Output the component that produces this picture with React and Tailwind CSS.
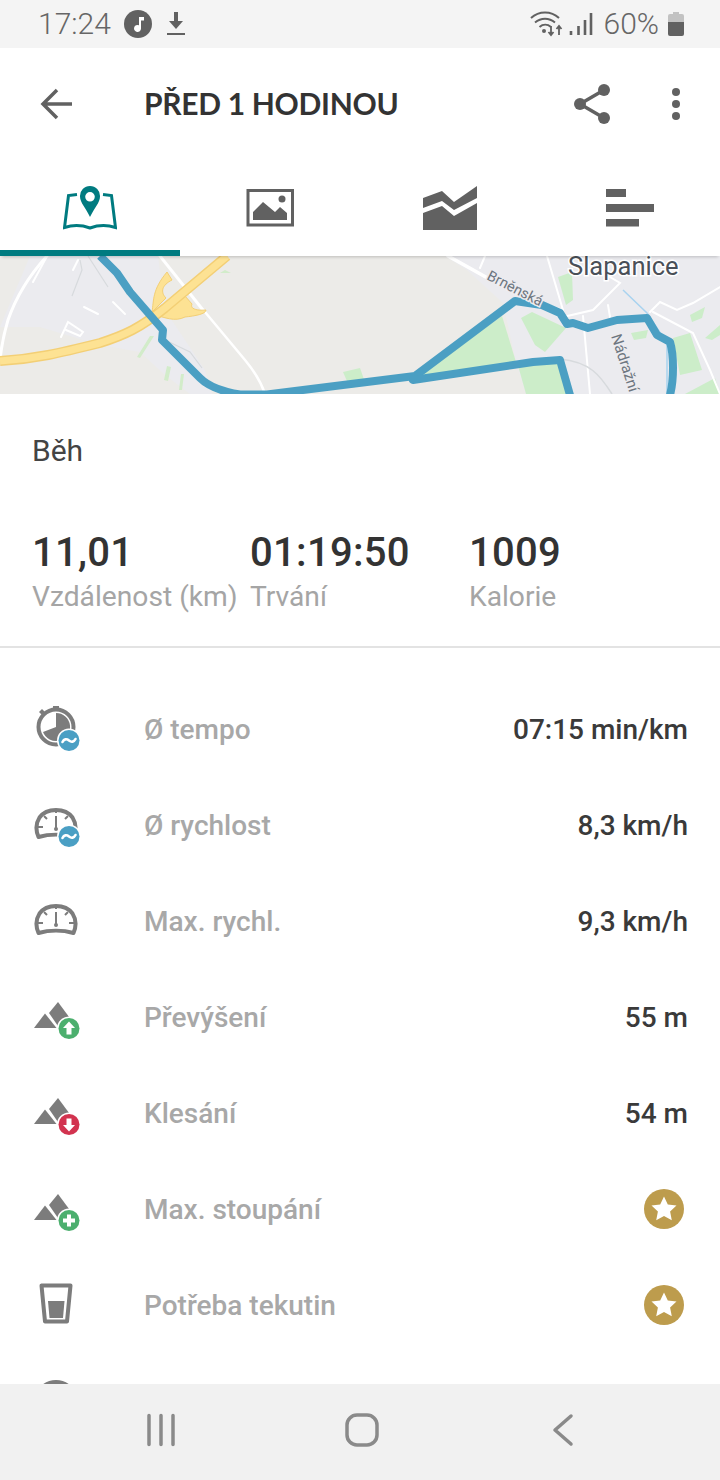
const stats = [
  { value: '11,01', label: 'Vzdálenost (km)', width: 'w-[218px]' },
  { value: '01:19:50', label: 'Trvání', width: 'w-[219px]' },
  { value: '1009', label: 'Kalorie', width: 'w-[200px]' },
];

function Badge({ color, children }) {
  return (
    <>
      <circle cx="36" cy="35.5" r="12" fill="#fff" />
      <circle cx="36" cy="35.5" r="10.5" fill={color} />
      {children}
    </>
  );
}

const Wave = () => (
  <Badge color="#4a9fc4">
    <path d="M29.5 37c1.5-3 4-3.5 6.500-1.500s5 1.500 6.500-1.500" fill="none" stroke="#fff" strokeWidth="2.600" strokeLinecap="round" />
  </Badge>
);

function RowIcon({ children }) {
  return (
    <svg width="48" height="48" viewBox="0 0 48 48" className="shrink-0">
      {children}
    </svg>
  );
}

const Pace = () => (
  <RowIcon>
    <circle cx="23" cy="22" r="17.500" fill="none" stroke="#7c7c7c" strokeWidth="4" />
    <rect x="20" y="1" width="6" height="4" fill="#7c7c7c" />
    <path d="M6 7l3-3 3 3-3 3z" fill="#7c7c7c" />
    <path d="M23 22V8A14 14 0 1 1 10 27z" fill="#7c7c7c" />
    <Wave />
  </RowIcon>
);

const Gauge = ({ children }) => (
  <RowIcon>
    <path d="M5.500 36C2.500 29 3 22 6.500 16.500 10.500 11 16 9 23 9s12.500 2 16.500 7.500C43 22 43.500 29 40.500 36 30 33 16 33 5.500 36z" fill="none" stroke="#7c7c7c" strokeWidth="4" strokeLinejoin="round" />
    <path d="M23 15v13M5 26h5M36 26h5M11 15l3 3M35 15l-3 3M23 9v3" stroke="#7c7c7c" strokeWidth="2" fill="none" />
    <circle cx="23" cy="28" r="2" fill="#7c7c7c" />
    {children}
  </RowIcon>
);

const Mountains = ({ children }) => (
  <RowIcon>
    <path d="M1 35L12 20.500 23.500 35z" fill="#7c7c7c" />
    <path d="M16 20L25 9l17 23-16 2.500z" fill="#7c7c7c" />
    {children}
  </RowIcon>
);

const Glass = () => (
  <RowIcon>
    <path d="M8.500 4.500h29L34 40.500H12z" fill="none" stroke="#7c7c7c" strokeWidth="4" strokeLinejoin="round" />
    <path d="M15 20h16.500l-1.500 17H16.500z" fill="#7c7c7c" />
  </RowIcon>
);

const rows = [
  { icon: <Pace />, label: 'Ø tempo', value: '07:15 min/km' },
  { icon: <Gauge><Wave /></Gauge>, label: 'Ø rychlost', value: '8,3 km/h' },
  { icon: <Gauge />, label: 'Max. rychl.', value: '9,3 km/h' },
  {
    icon: (
      <Mountains>
        <Badge color="#4caf6e">
          <path d="M36 28.500l6 6.500h-3.500v6.500h-5V35H30z" fill="#fff" />
        </Badge>
      </Mountains>
    ),
    label: 'Převýšení',
    value: '55 m',
  },
  {
    icon: (
      <Mountains>
        <Badge color="#d2334f">
          <path d="M36 42.500l6-6.500h-3.500v-6.500h-5V36H30z" fill="#fff" />
        </Badge>
      </Mountains>
    ),
    label: 'Klesání',
    value: '54 m',
  },
  {
    icon: (
      <Mountains>
        <Badge color="#4caf6e">
          <path d="M34 29.500h4V33.500h4v4h-4v4h-4v-4h-4v-4h4z" fill="#fff" />
        </Badge>
      </Mountains>
    ),
    label: 'Max. stoupání',
    star: true,
  },
  { icon: <Glass />, label: 'Potřeba tekutin', star: true },
];

function Star() {
  return (
    <svg width="40" height="40" viewBox="0 0 40 40" className="mr-[4px]">
      <circle cx="20" cy="20" r="20" fill="#bd9c4d" />
      <path d="M20 7.500l3.800 8 8.700 1.100-6.400 6 1.700 8.700-7.800-4.300-7.800 4.300 1.700-8.700-6.400-6 8.700-1.100z" fill="#fff" />
    </svg>
  );
}

function StatusBar() {
  return (
    <div className="h-[48px] shrink-0 bg-[#f4f4f4] flex items-center pl-[38px] pr-[36px] text-[#666] text-[30px] font-[Roboto,sans-serif]">
      <span className="w-[86px] font-light leading-none">17:24</span>
      <svg width="28" height="28" viewBox="0 0 28 28">
        <circle cx="14" cy="14" r="14" fill="#616161" />
        <path d="M15 7h5v3.500h-3v8a3.500 3.500 0 1 1-2-3.200z" fill="#fff" />
      </svg>
      <svg width="20" height="26" viewBox="0 0 20 26" className="ml-[14px]">
        <path d="M8 1h4v9h5l-7 8-7-8h5z" fill="#616161" />
        <path d="M1 23h18" stroke="#616161" strokeWidth="2" />
      </svg>
      <div className="flex-1" />
      <svg width="33" height="26" viewBox="0 0 33 26">
        <path d="M1 7c8-7.500 20-7.500 28 0M5 11.500c6-5 14-5 20 0M9.500 16c3.500-3 8-3 11.500 0" fill="none" stroke="#616161" strokeWidth="2" />
        <circle cx="14" cy="20" r="2" fill="#616161" />
        <path d="M21 15v8M18.500 21l2.500 3 2.500-3M29 24v-8M26.500 18l2.500-3 2.500 3" fill="none" stroke="#616161" strokeWidth="1.800" />
      </svg>
      <svg width="24" height="26" viewBox="0 0 24 26" className="ml-[6px]">
        <path d="M2 20v4M9.500 15v9M16 9v15M22 2v22" stroke="#616161" strokeWidth="2.600" fill="none" />
      </svg>
      <span className="ml-[11px] font-light leading-none">60%</span>
      <svg width="16" height="24" viewBox="0 0 16 24" className="ml-[9px]">
        <path d="M5 0h6v2h3a2 2 0 0 1 2 2v6H0V4a2 2 0 0 1 2-2h3z" fill="#c2c2c2" />
        <path d="M0 10h16v12a2 2 0 0 1-2 2H2a2 2 0 0 1-2-2z" fill="#616161" />
      </svg>
    </div>
  );
}

function Header() {
  return (
    <div className="h-[112px] shrink-0 bg-white flex items-center pl-[40px] pr-[40px]">
      <svg width="33" height="32" viewBox="0 0 33 32" className="shrink-0">
        <path d="M32 16H3M17 2L3 16l14 14" fill="none" stroke="#616161" strokeWidth="3.500" />
      </svg>
      <h1 className="ml-[71px] pb-[2px] text-[30px] font-bold tracking-[-0.3px] text-[#333] font-[Lato,sans-serif] whitespace-nowrap">
        PŘED 1 HODINOU
      </h1>
      <div className="flex-1" />
      <svg width="38" height="42" viewBox="0 0 38 42">
        <path d="M31 7L7 21l24 14" fill="none" stroke="#616161" strokeWidth="3.500" />
        <circle cx="31" cy="7" r="6" fill="#616161" />
        <circle cx="7" cy="21" r="6" fill="#616161" />
        <circle cx="31" cy="35" r="6" fill="#616161" />
      </svg>
      <svg width="8" height="32" viewBox="0 0 8 32" className="ml-[61px]">
        <circle cx="4" cy="4" r="4" fill="#616161" />
        <circle cx="4" cy="16" r="4" fill="#616161" />
        <circle cx="4" cy="28" r="4" fill="#616161" />
      </svg>
    </div>
  );
}

function Tabs() {
  return (
    <div className="h-[96px] shrink-0 bg-white grid grid-cols-4 relative z-10 shadow-[0_3px_3px_-2px_rgba(0,0,0,0.2)]">
      <div className="flex flex-col items-center pt-[26px] border-b-[6px] border-[#007b80]">
        <svg width="54" height="44" viewBox="63 186 54 44">
          <path d="M77 194.500l-8.500 1L64.500 227.500c8-2.500 17-2.500 25.500 0.500 8.500-3 17.500-3 25.500-0.500l-4-32-8.500-1" fill="none" stroke="#007b80" strokeWidth="3" />
          <path fillRule="evenodd" d="M90 186a10 10 0 0 1 10 10.500c0 6-6 12-10 20.500-4-8.500-10-14.500-10-20.500A10 10 0 0 1 90 186zm0 6a4.800 4.800 0 1 0 0 9.600 4.800 4.800 0 0 0 0-9.600z" fill="#007b80" />
        </svg>
      </div>
      <div className="flex flex-col items-center pt-[26px]">
        <svg width="54" height="44" viewBox="243 186 54 44">
          <rect x="248" y="190.500" width="44.500" height="34.500" fill="none" stroke="#616161" strokeWidth="3" />
          <circle cx="282" cy="199" r="3.500" fill="#616161" />
          <path d="M253 220v-8l10-10 12 10 5-5 7 6v7z" fill="#616161" />
        </svg>
      </div>
      <div className="flex flex-col items-center pt-[26px]">
        <svg width="54" height="44" viewBox="423 186 54 44">
          <path d="M423 198l19-7 12 11 23-16v12l-23 12-12-9-19 7z" fill="#616161" />
          <path d="M423 213l19-7 12 10 23-13v27h-54z" fill="#616161" />
        </svg>
      </div>
      <div className="flex flex-col items-center pt-[26px]">
        <svg width="54" height="44" viewBox="603 186 54 44">
          <path d="M606 189h20v8h-20zM606 204h48v8h-48zM606 219h33v7.500h-33z" fill="#616161" />
        </svg>
      </div>
    </div>
  );
}

function MapStrip() {
  return (
    <div className="h-[138px] shrink-0 bg-[#ecebe8]">
      <svg width="720" height="138" viewBox="0 256 720 138" className="block">
        <path d="M30 256L0 327H40L100 345 140 352 165 375 190 394H212L205 370 165 310 158 256zM445 256L467 270 503 303 516 362 526 394H720V256z" fill="#ebebef" />
        {/* parks */}
        <path d="M415 377L502 316 516 362z" fill="#ccedc9" />
        <path d="M517 362L560 359 570 394H526zM521 318L532 312 566 328 545 352 535 345zM558 277L572 272 573 300 566 305zM631 333L648 330 646 338 634 340zM673 338L690 333 702 370 680 375zM685 394L715 378 720 394zM690 315L705 307 702 318 692 322zM705 338L720 325V335L712 340zM343 372L360 368 366 385 350 388z" fill="#ccedc9" />
        <path d="M225 270l6 3h-11zM150 336l4 0-14 22-3-1zM167 366l4 1-3 14-4-1zM181 374l3 0-2 16-3 0z" fill="#d2ecca" />
        {/* white roads */}
        <g fill="none" stroke="#fff" strokeLinecap="round">
          <path d="M47 256C25 280 15 300 8 320 2 340 1 350 0 360" strokeWidth="3" />
          <path d="M46 258L33 282M78 260L73 270M84 307L98 314M113 302L125 314M61 337L68 322 83 332 80 336 66 330" strokeWidth="2" />
          <path d="M160 256L203 310" strokeWidth="3" />
          <path d="M205 312L245 360C255 372 262 385 265 394" strokeWidth="2.500" />
          <path d="M448 256L520 296 560 310" strokeWidth="3.500" />
          <path d="M485 256L480 268M547 256L563 310M583 316L590 394M563 317L593 310 620 283 610 277M608 305L610 317M650 312L660 302 677 310 693 303 720 287M653 312L693 333 710 370 720 394" strokeWidth="2" />
        </g>
        <path d="M88 256L108 287M72 296L82 270 80 260" fill="none" stroke="#d7dadd" strokeWidth="1.200" />
        <path d="M165 340L190 352 202 368" fill="none" stroke="#d7dadd" strokeWidth="1.200" />
        <path d="M560 359C590 362 600 375 612 394" fill="none" stroke="#d7dadd" strokeWidth="1.500" />
        <path d="M623 290L647 313 667 343 667 394" fill="none" stroke="#a9d3ef" strokeWidth="1.500" />
        {/* yellow highway */}
        <path d="M167 272L172 280C162 285 160 292 166 298L152 312C154 300 152 290 167 272zM150 313L185 296 192 304C190 308 195 311 206 310 206 314 195 316 185 317 175 322 165 318 150 313z" fill="#fde293" stroke="#f3cf75" strokeWidth="1" />
        <path d="M0 361C35 359 60 353 100 343 125 335 140 328 165 308L227 256" fill="none" stroke="#f3cf75" strokeWidth="10" />
        <path d="M0 361C35 359 60 353 100 343 125 335 140 328 165 308L227 256" fill="none" stroke="#fde293" strokeWidth="7" />
        {/* route */}
        <g fill="none" stroke="#4b9fc3" strokeWidth="8" strokeLinejoin="round">
          <path d="M100 256L117 273 130 292 163 330 162 340 200 378C210 388 225 392 240 394.500H267L415 376 515 301 542 305 560 313 567 324 573 323 588 328 617 320 647 318 657 335 670 342C674 355 674 380 670 395" />
          <path d="M415 377L413 380 533 362 560 360 570 395" />
        </g>
        {/* labels */}
        <g fontFamily="Roboto, sans-serif">
          <text x="568" y="275" fontSize="25.500" fill="#4a5058" stroke="#fff" strokeWidth="3" paintOrder="stroke">Slapanice</text>
          <text x="0" y="0" fontSize="14.500" fill="#6d7680" stroke="#ecebef" strokeWidth="3" paintOrder="stroke" transform="translate(486 279) rotate(27)">Brněnská</text>
          <text x="0" y="0" fontSize="15" fill="#6d7680" stroke="#ecebef" strokeWidth="3" paintOrder="stroke" transform="translate(611 336) rotate(72)">Nádražní</text>
        </g>
      </svg>
    </div>
  );
}

function Summary() {
  return (
    <div className="h-[254px] shrink-0 bg-white border-b-2 border-[#e3e3e3] pl-[32px] font-[Roboto,sans-serif]">
      <p className="pt-[39px] text-[30px] leading-[36px] text-[#444]">Běh</p>
      <div className="flex mt-[61px]">
        {stats.map((s) => (
          <div key={s.label} className={s.width}>
            <p className="text-[40px] leading-[46px] font-medium text-[#333] tracking-[0.3px]">{s.value}</p>
            <p className="mt-[3px] text-[28.2px] leading-[36px] text-[#a5a5a5] whitespace-nowrap">{s.label}</p>
          </div>
        ))}
      </div>
    </div>
  );
}

function Row({ icon, label, value, star }) {
  return (
    <div className="h-[96px] shrink-0 flex items-center pl-[33px] pr-[32px]">
      {icon}
      <span className="ml-[63px] pt-[2px] flex-1 text-[28px] font-medium text-[#a8a8a8]">{label}</span>
      {star ? <Star /> : <span className="pt-[2px] text-[28px] font-medium text-[#3a3a3a]">{value}</span>}
    </div>
  );
}

function NavBar() {
  return (
    <div className="h-[96px] shrink-0 bg-[#f1f1f1] flex items-center pl-[145px] pb-[5px]">
      <svg width="32" height="34" viewBox="0 0 32 34">
        <path d="M4 2.500v29M16 2.500v29M28 2.500v29" stroke="#8a8a8a" strokeWidth="3.500" strokeLinecap="round" />
      </svg>
      <svg width="36" height="36" viewBox="0 0 36 36" className="ml-[167px]">
        <rect x="3" y="3" width="30" height="30" rx="10" fill="none" stroke="#8a8a8a" strokeWidth="3.500" />
      </svg>
      <svg width="22" height="34" viewBox="0 0 22 34" className="ml-[172px]">
        <path d="M19 3L3 17l16 14" fill="none" stroke="#8a8a8a" strokeWidth="3.500" strokeLinecap="round" strokeLinejoin="round" />
      </svg>
    </div>
  );
}

export default function App() {
  return (
    <div className="w-[720px] h-[1480px] flex flex-col overflow-hidden bg-white">
      <StatusBar />
      <Header />
      <Tabs />
      <MapStrip />
      <Summary />
      <div className="flex-1 min-h-0 overflow-hidden pt-[33px] font-[Roboto,sans-serif]">
        {rows.map((r) => (
          <Row key={r.label} {...r} />
        ))}
        <Row
          icon={
            <RowIcon>
              <circle cx="23" cy="25" r="20" fill="none" stroke="#7c7c7c" strokeWidth="4" />
            </RowIcon>
          }
        />
      </div>
      <NavBar />
    </div>
  );
}
